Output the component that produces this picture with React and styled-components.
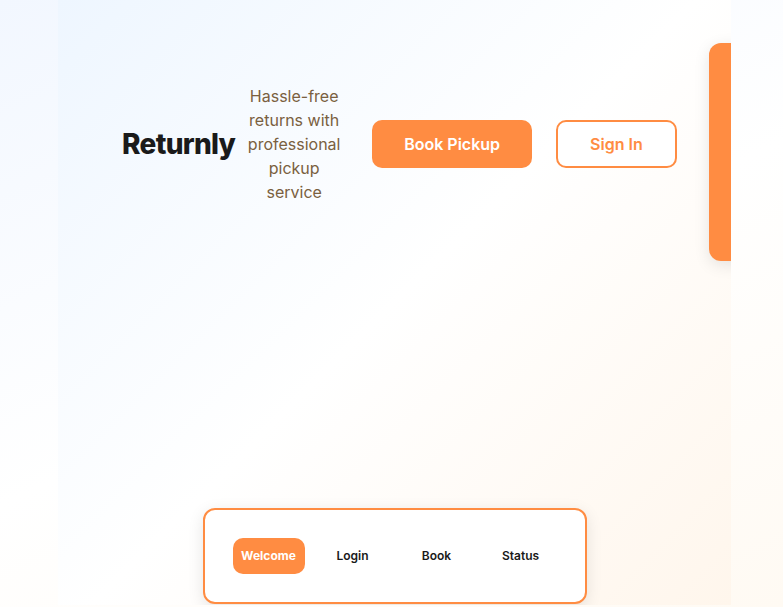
import React from "react";
import styled, { createGlobalStyle } from "styled-components";

const Global = createGlobalStyle`
  * { box-sizing: border-box; }
  body {
    margin: 0;
    font-family: Inter, sans-serif;
    font-size: 16px;
    line-height: 24px;
    color: #1a1a1a;
    overflow: hidden;
  }
`;

const Page = styled.div`
  display: flex;
  height: 100vh;
  padding: 0 52px 2px 58px;
  background: linear-gradient(155deg, #f2f7ff 0%, #ffffff 52%, #fffaf3 100%);
`;

const Screen = styled.main`
  flex: 1;
  min-width: 0;
  display: flex;
  flex-direction: column;
  justify-content: space-between;
  overflow: hidden;
  background: linear-gradient(135deg, #eef6ff 0%, #ffffff 50%, #fff6ec 100%);
`;

const Hero = styled.section`
  display: flex;
  align-items: center;
  padding: 43px 0 0 64px;
`;

const Title = styled.h1`
  flex: none;
  margin: 0 12px 16px 0;
  font-size: 28px;
  line-height: 36px;
  font-weight: 800;
  letter-spacing: -0.025em;
`;

const Tagline = styled.p`
  flex: none;
  width: 94px;
  margin: 0 31px 16px 0;
  text-align: center;
  color: #7a6040;
`;

const Button = styled.button`
  flex: none;
  height: 48px;
  padding: 0 32px;
  margin: 0 24px 16px 0;
  border: ${(p) => (p.$primary ? "0" : "2px solid #ff8c42")};
  border-radius: 10px;
  background: ${(p) => (p.$primary ? "#ff8c42" : "#ffffff")};
  color: ${(p) => (p.$primary ? "#ffffff" : "#ff8c42")};
  font: 600 16px/24px Inter, sans-serif;
`;

const Promo = styled.aside`
  flex: none;
  width: 320px;
  height: 218px;
  margin-left: 8px;
  border-radius: 12px;
  background: #ff8c42;
  box-shadow: 0 4px 16px rgba(0, 0, 0, 0.1);
`;

const Nav = styled.nav`
  display: flex;
  align-self: center;
  gap: 12px;
  padding: 28px;
  margin-bottom: 1px;
  border: 2px solid #ff8c42;
  border-radius: 12px;
  background: #ffffff;
  box-shadow: 0 4px 16px rgba(0, 0, 0, 0.1);
`;

const Tab = styled.button`
  width: 72px;
  height: 36px;
  padding: 0;
  border: 0;
  border-radius: 10px;
  background: ${(p) => (p.$active ? "#ff8c42" : "transparent")};
  color: ${(p) => (p.$active ? "#ffffff" : "#1a1a1a")};
  font: ${(p) => (p.$active ? 700 : 600)} 12px/16px Inter, sans-serif;
`;

const tabs = ["Welcome", "Login", "Book", "Status"];

export default function App() {
  return (
    <Page>
      <Global />
      <Screen>
        <Hero>
          <Title>Returnly</Title>
          <Tagline>Hassle-free returns with professional pickup service</Tagline>
          <Button type="button" $primary>Book Pickup</Button>
          <Button type="button">Sign In</Button>
          <Promo />
        </Hero>
        <Nav>
          {tabs.map((tab, i) => (
            <Tab key={tab} type="button" $active={i === 0}>{tab}</Tab>
          ))}
        </Nav>
      </Screen>
    </Page>
  );
}
